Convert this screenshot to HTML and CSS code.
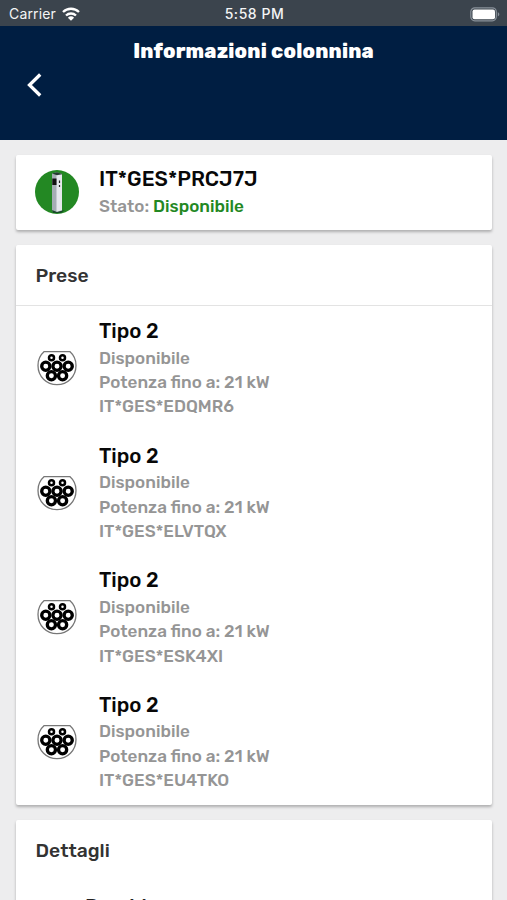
FILE: index.html
```html
<!DOCTYPE html>
<html lang="it">
<head>
<meta charset="utf-8">
<title>Informazioni colonnina</title>
<link rel="stylesheet" href="styles.css">
</head>
<body>
<svg class="defs" aria-hidden="true">
  <symbol id="plug" viewBox="0 0 40 36">
    <path d="M7.2 1.600H32.800A19 18.500 0 0 1 39 15.500C39 26.500 30.500 34.700 20 34.700S1 26.500 1 15.500A19 18.500 0 0 1 7.200 1.600Z" fill="#fff" stroke="#777" stroke-width="1.300"/>
    <g fill="#fff" stroke="#000"><g stroke-width="2.500"><circle cx="14.500" cy="7.700" r="2.500"/><circle cx="25.500" cy="7.700" r="2.500"/></g>
    <g stroke-width="3.300"><circle cx="8.800" cy="16.300" r="4.100"/><circle cx="20" cy="16.300" r="4.100"/><circle cx="31.200" cy="16.300" r="4.100"/><circle cx="14.400" cy="25.700" r="4.100"/><circle cx="25.600" cy="25.700" r="4.100"/></g></g>
  </symbol>
</svg>
<div class="status-bar">
  <div class="carrier"><span>Carrier</span>
    <svg width="18" height="14" viewBox="0 0 18 14"><g fill="none" stroke="#fff" stroke-width="2.300"><path d="M1 5A11.500 11.500 0 0 1 17 5"/><path d="M4 8.500A7.200 7.200 0 0 1 14 8.500"/></g><path d="M5.900 10.700A4.500 4.500 0 0 1 12.100 10.700L9 13.700Z" fill="#fff"/></svg>
  </div>
  <div class="clock">5:58 PM</div>
  <svg class="battery" width="31" height="15" viewBox="0 0 31 15"><rect x=".8" y=".8" width="25.500" height="13" rx="4" fill="none" stroke="#89919a" stroke-width="1.200"/><rect x="2.500" y="2.500" width="22.500" height="9.800" rx="2" fill="#fff"/><path d="M27.800 5Q31 7.300 27.800 9.600Z" fill="#89919a"/></svg>
</div>
<header>
  <h1>Informazioni colonnina</h1>
  <svg class="back" width="16" height="24" viewBox="0 0 16 24"><path d="M13.200 1.500 2.500 12 13.200 22.500" fill="none" stroke="#fff" stroke-width="3.300"/></svg>
</header>
<main>
  <section class="card station">
    <svg class="icon station-icon" width="44" height="44" viewBox="0 0 44 44"><circle cx="22" cy="22" r="22" fill="#238823"/><path d="M17 3.500 22 2.300 27 4V41L21 43 17 41Z" fill="#a5adb4"/><path d="M21.500 5H27V40L21.500 42Z" fill="#e5e8ed"/><path d="M17 3.500 22 2.300 27 4 22 5.300Z" fill="#253b30"/><path d="M17.300 8.500H21.500V15H17.300Z" fill="#111"/><path d="M24.500 10.500V13M24.500 15V17" stroke="#222" stroke-width="1.200"/><path d="M17 40 22 42 30 40 26 43H18Z" fill="#174a27"/></svg>
    <div><h2 class="station-name">IT*GES*PRCJ7J</h2><p class="state">Stato: <span>Disponibile</span></p></div>
  </section>
  <section class="card sockets">
    <h3>Prese</h3>
    <div class="socket"><svg class="icon"><use href="#plug"/></svg><div><h2>Tipo 2</h2><p>Disponibile</p><p>Potenza fino a: 21 kW</p><p>IT*GES*EDQMR6</p></div></div>
    <div class="socket"><svg class="icon"><use href="#plug"/></svg><div><h2>Tipo 2</h2><p>Disponibile</p><p>Potenza fino a: 21 kW</p><p>IT*GES*ELVTQX</p></div></div>
    <div class="socket"><svg class="icon"><use href="#plug"/></svg><div><h2>Tipo 2</h2><p>Disponibile</p><p>Potenza fino a: 21 kW</p><p>IT*GES*ESK4XI</p></div></div>
    <div class="socket"><svg class="icon"><use href="#plug"/></svg><div><h2>Tipo 2</h2><p>Disponibile</p><p>Potenza fino a: 21 kW</p><p>IT*GES*EU4TKO</p></div></div>
  </section>
  <section class="card details"><h3>Dettagli</h3><p class="detail-title">Provider</p></section>
</main>
</body>
</html>
```
FILE: styles.css
```css
* { box-sizing: border-box; }
body { margin: 0; height: 900px; overflow: hidden; background: #ededee; font-family: Rubik, Roboto, sans-serif; }
h1, h2, h3, p { margin: 0; }
.defs { display: none; }
.status-bar { height: 26px; background: #3b444d; color: #f4f5f6; display: grid; grid-template-columns: 1fr auto 1fr; align-items: center; padding: 2px 7px 0 9px; font: 15px/22px Inter, sans-serif; }
.carrier { display: flex; align-items: center; gap: 6px; font-size: 14px; letter-spacing: .15px; }
.clock { font-weight: 500; font-size: 14px; letter-spacing: .55px; }
.battery { justify-self: end; margin-right: -1px; }
header { height: 114px; background: #001e42; color: #fff; padding-top: 12px; }
h1 { text-align: center; font: 800 20px/26px Rubik, Inter, sans-serif; letter-spacing: .2px; }
.back { display: block; margin: 9px 0 0 27px; }
main { padding: 15px 15px 0 16px; display: flex; flex-direction: column; gap: 15px; }
.card { flex: none; background: #fff; border-radius: 2px; box-shadow: 0 2px 3px #0004; }
.station, .socket { display: flex; align-items: flex-start; }
.station { height: 75px; padding: 10px 19px; }
.icon { flex: none; width: 40px; height: 36px; margin: 33px 22px 0 21px; }
.station-icon { width: 44px; height: 44px; margin: 5px 20px 0 0; }
h2 { font-size: 20.500px; line-height: 28px; margin-bottom: .6px; font-weight: 500; color: #080808; }
.station-name { font-size: 20.800px; }
p { width: max-content; font-size: 17.100px; line-height: 24.400px; font-weight: 500; color: #959595; }
.state span { color: #238823; }
.sockets { height: 560px; }
h3 { height: 61px; padding: 0 19.500px; border-bottom: 1px solid #e3e3e3; font-size: 19.300px; line-height: 62px; font-weight: 500; color: #333; }
.socket { height: 124.600px; padding-top: 11px; }
.details { height: 110px; }
.details h3 { border: 0; }
.details .detail-title { padding: 14px 0 0 69px; font-size: 20px; color: #222; }
```
